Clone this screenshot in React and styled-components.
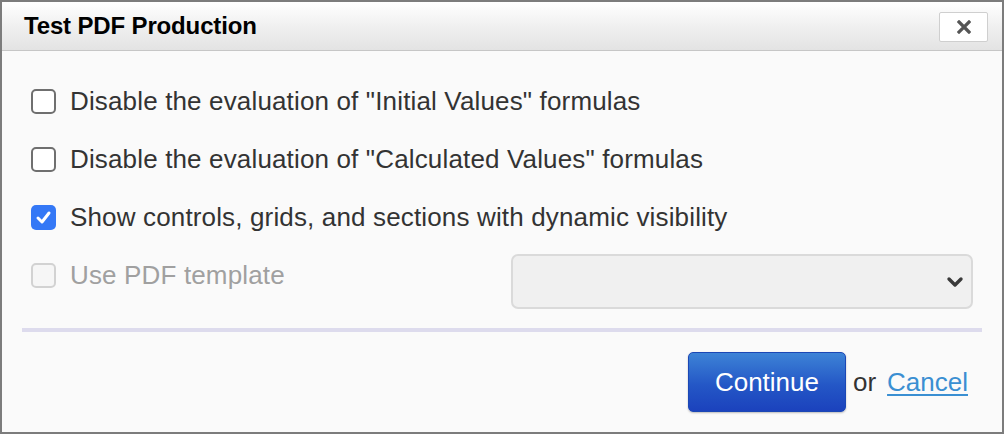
import React from 'react';
import styled, { createGlobalStyle } from 'styled-components';

const GlobalStyle = createGlobalStyle`
  html, body {
    margin: 0;
    padding: 0;
    background: #fafafa;
  }
  body {
    font-family: "Liberation Sans", Arial, sans-serif;
  }
`;

const Dialog = styled.div`
  box-sizing: border-box;
  width: 1004px;
  height: 434px;
  border: 2px solid #7c7c7c;
  background: #fafafa;
  display: flex;
  flex-direction: column;
`;

const Header = styled.div`
  box-sizing: border-box;
  height: 49px;
  display: flex;
  align-items: center;
  justify-content: space-between;
  padding: 0 14px 0 22px;
  background: linear-gradient(to bottom, #ffffff 0%, #f0f0f0 50%, #e3e3e3 100%);
  border-bottom: 1px solid #c6c6c6;
`;

const Title = styled.h1`
  margin: 0;
  font-size: 24px;
  font-weight: bold;
  color: #000;
  letter-spacing: -0.15px;
`;

const CloseButton = styled.button`
  box-sizing: border-box;
  width: 49px;
  height: 30px;
  margin-top: 2px;
  border: 1px solid #cfcfcf;
  border-radius: 2px;
  background: #ffffff;
  display: flex;
  align-items: center;
  justify-content: center;
  padding: 0;
`;

const Body = styled.div`
  flex: 1;
  display: flex;
  flex-direction: column;
  padding: 21px 20px 0 20px;
`;

const Row = styled.div`
  display: flex;
  align-items: flex-start;
  padding: 0 9px;
`;

const Option = styled.label`
  display: flex;
  align-items: center;
  height: 58px;
  width: ${({ wide }) => (wide ? 'auto' : '480px')};
  flex-shrink: 0;
  font-size: 26px;
  letter-spacing: 0.15px;
  color: ${({ disabled }) => (disabled ? '#a0a0a0' : '#333333')};
`;

const Box = styled.span`
  box-sizing: border-box;
  width: 25px;
  height: 25px;
  border-radius: 5px;
  margin-right: 14px;
  display: flex;
  align-items: center;
  justify-content: center;
  border: ${({ checked, disabled }) =>
    checked ? 'none' : disabled ? '2px solid #d2d2d2' : '2px solid #6f6f6f'};
  background: ${({ checked, disabled }) =>
    checked ? '#3478f6' : disabled ? '#f6f6f6' : '#ffffff'};
`;

const Select = styled.div`
  box-sizing: border-box;
  flex: 1;
  height: 55px;
  margin-top: 8px;
  border: 2px solid #dadada;
  border-radius: 7px;
  background: #f0f0f0;
  display: flex;
  align-items: center;
  justify-content: flex-end;
  padding-right: 6px;
`;

const Divider = styled.hr`
  margin: 19px 0 0;
  border: none;
  height: 4px;
  background: #dddbed;
`;

const Footer = styled.div`
  display: flex;
  align-items: center;
  justify-content: flex-end;
  padding: 20px 14px 0 0;
  font-size: 26px;
  color: #333;
`;

const PrimaryButton = styled.button`
  box-sizing: border-box;
  width: 158px;
  height: 60px;
  border: 1px solid #1b47b5;
  border-radius: 5px;
  background: linear-gradient(to bottom, #3d83d6 0%, #2457c6 55%, #1b42bd 100%);
  color: #fff;
  font-family: "Liberation Sans", Arial, sans-serif;
  font-size: 26px;
  box-shadow: 0 1px 2px rgba(0, 0, 0, 0.25);
`;

const Or = styled.span`
  margin: 0 11px 0 7px;
`;

const Link = styled.a`
  color: #3a8fd2;
  text-decoration: underline;
  text-underline-offset: 3px;
`;

const Check = ({ checked, disabled }) => (
  <Box checked={checked} disabled={disabled}>
    {checked && (
      <svg width="17" height="17" viewBox="0 0 17 17">
        <path d="M3 9 L7 13 L14 4" fill="none" stroke="#fff" strokeWidth="3" strokeLinecap="round" strokeLinejoin="round" />
      </svg>
    )}
  </Box>
);

export default function App() {
  return (
    <>
      <GlobalStyle />
      <Dialog>
        <Header>
          <Title>Test PDF Production</Title>
          <CloseButton aria-label="Close">
            <svg width="14" height="14" viewBox="0 0 14 14">
              <path d="M2 2 L12 12 M12 2 L2 12" stroke="#555" strokeWidth="3.2" strokeLinecap="square" />
            </svg>
          </CloseButton>
        </Header>
        <Body>
          <Row>
            <Option wide>
              <Check />
              Disable the evaluation of "Initial Values" formulas
            </Option>
          </Row>
          <Row>
            <Option wide>
              <Check />
              Disable the evaluation of "Calculated Values" formulas
            </Option>
          </Row>
          <Row>
            <Option wide>
              <Check checked />
              Show controls, grids, and sections with dynamic visibility
            </Option>
          </Row>
          <Row>
            <Option disabled>
              <Check disabled />
              Use PDF template
            </Option>
            <Select>
              <svg width="20" height="14" viewBox="0 0 20 14">
                <path d="M4 4 L10 10 L16 4" fill="none" stroke="#3a3a3a" strokeWidth="3.4" strokeLinecap="round" strokeLinejoin="round" />
              </svg>
            </Select>
          </Row>
          <Divider />
          <Footer>
            <PrimaryButton>Continue</PrimaryButton>
            <Or>or</Or>
            <Link href="#">Cancel</Link>
          </Footer>
        </Body>
      </Dialog>
    </>
  );
}
